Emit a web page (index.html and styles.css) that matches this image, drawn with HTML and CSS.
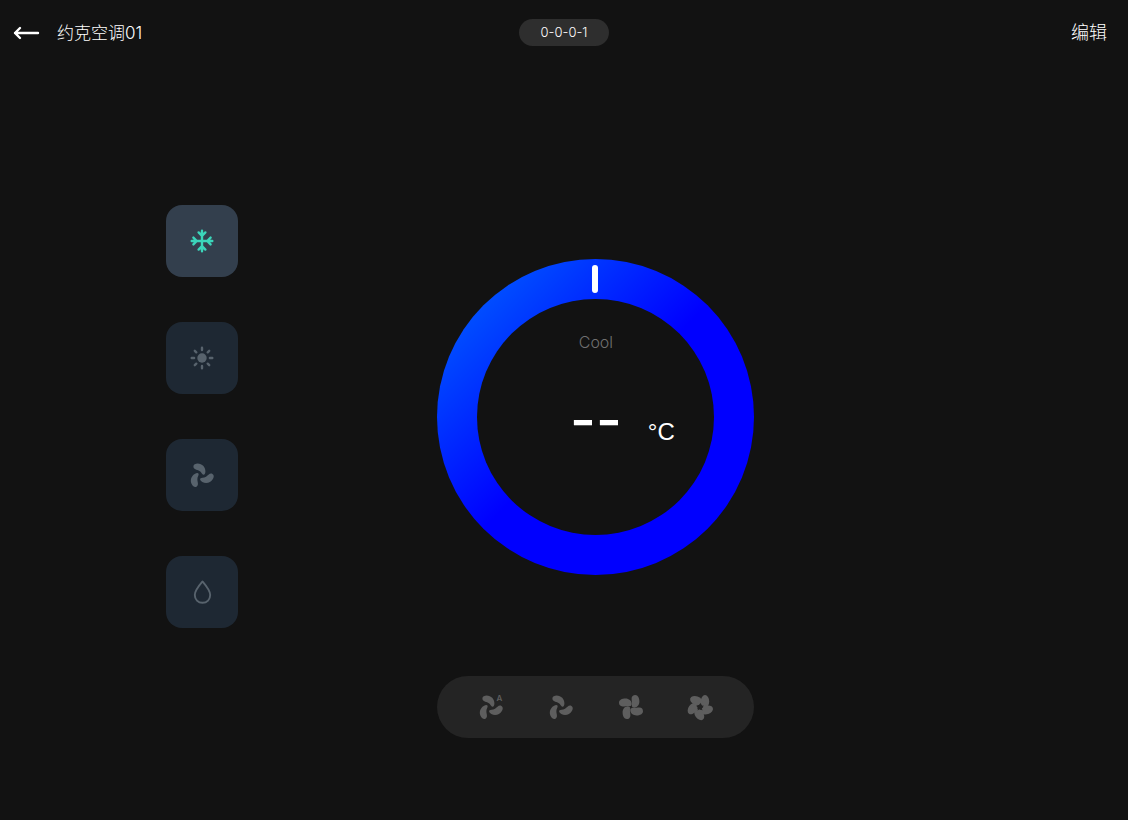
FILE: index.html
```html
<!DOCTYPE html>
<html lang="zh-CN">
<head>
  <meta charset="UTF-8">
  <meta name="viewport" content="width=device-width, initial-scale=1">
  <title>约克空调01</title>
  <link rel="stylesheet" href="styles.css">
</head>
<body>
  <!-- shared fan blades -->
  <svg class="defs" aria-hidden="true">
    <defs>
      <path id="blade" d="M-7.4 -9.2C-7.4 -11.4 -5.2 -12.1 -3.2 -12.1C1.4 -12.1 4.6 -8.4 4.6 -4.4C4.6 -2 3.8 -.9 2.7 -1C1.2 -1.2 .8 -3.8 -1.8 -5C-4 -6 -7.4 -6.4 -7.4 -9.2Z"/>
      <path id="blade4" d="M.6 -8.4C.6 -10.8 2.2 -12 4.2 -12C7 -12 8.4 -9 8.4 -5.5C8.4 -2 6 .6 3.5 .7C1.4 .8 .8 0 1 -1.8C1.3 -4.4 .6 -5.6 .6 -8.4Z"/>
      <g id="fan3">
        <use href="#blade"/>
        <use href="#blade" transform="rotate(120)"/>
        <use href="#blade" transform="rotate(240)"/>
      </g>
    </defs>
  </svg>

  <header class="header">
    <div class="header-left">
      <button class="back" aria-label="返回">
        <svg width="28" height="16" viewBox="0 0 28 16"><path d="M7 3L2 8L7 13M2 8H25"/></svg>
      </button>
      <h1 class="title">约克空调01</h1>
    </div>
    <span class="address">0-0-0-1</span>
    <button class="edit">编辑</button>
  </header>

  <main class="main">
    <nav class="modes" aria-label="模式">
      <button class="mode active" aria-label="制冷">
        <svg class="icon line" viewBox="-12 -12 24 24">
          <path d="M0 -10.3V10.3M-10.3 0H10.3M-3.4 -8.6L0 -5.2L3.4 -8.6M-3.4 8.6L0 5.2L3.4 8.6M-8.6 -3.4L-5.2 0L-8.6 3.4M8.6 -3.4L5.2 0L8.6 3.4"/>
        </svg>
      </button>
      <button class="mode" aria-label="制热">
        <svg class="icon line" viewBox="-12 -12 24 24">
          <circle class="core" r="4.7"/>
          <path d="M0 -10.3V-7.9M0 10.3V7.9M-10.3 0H-7.9M10.3 0H7.9M-7.2 -7.2L-5.7 -5.7M7.2 7.2L5.7 5.7M-7.2 7.2L-5.7 5.7M7.2 -7.2L5.7 -5.7"/>
        </svg>
      </button>
      <button class="mode" aria-label="送风">
        <svg class="icon" viewBox="-12 -12 24 24"><use href="#fan3" transform="translate(-1.2 .7)"/></svg>
      </button>
      <button class="mode" aria-label="除湿">
        <svg class="icon line drop" viewBox="-12 -12 24 24">
          <path d="M.5 -10.5C-2.5 -7 -7.2 -1.6 -7.2 3C-7.2 7.4 -4 10.8 .5 10.8C5 10.8 8.2 7.4 8.2 3C8.2 -1.6 3.5 -7 .5 -10.5Z"/>
        </svg>
      </button>
    </nav>

    <section class="panel">
      <div class="dial">
        <span class="marker"></span>
        <div class="dial-inner">
          <span class="mode-name">Cool</span>
          <div class="reading">
            <span class="temp">--</span>
            <span class="unit">°C</span>
          </div>
        </div>
      </div>

      <div class="speeds">
        <button class="speed" aria-label="自动">
          <svg class="icon" viewBox="-12 -12 24 24"><use href="#fan3" transform="translate(-1.2 .7)"/></svg>
          <span class="auto">A</span>
        </button>
        <button class="speed" aria-label="低风">
          <svg class="icon" viewBox="-12 -12 24 24"><use href="#fan3" transform="translate(-1.2 .7)"/></svg>
        </button>
        <button class="speed" aria-label="中风">
          <svg class="icon" viewBox="-12 -12 24 24">
            <use href="#blade4"/>
            <use href="#blade4" transform="rotate(90)"/>
            <use href="#blade4" transform="rotate(180)"/>
            <use href="#blade4" transform="rotate(270)"/>
          </svg>
        </button>
        <button class="speed" aria-label="高风">
          <svg class="icon" viewBox="-12 -12 24 24">
            <ellipse cx="5" cy="-5.6" rx="4.2" ry="6.3"/>
            <ellipse cx="5" cy="-5.6" rx="4.2" ry="6.3" transform="rotate(72)"/>
            <ellipse cx="5" cy="-5.6" rx="4.2" ry="6.3" transform="rotate(144)"/>
            <ellipse cx="5" cy="-5.6" rx="4.2" ry="6.3" transform="rotate(216)"/>
            <ellipse cx="5" cy="-5.6" rx="4.2" ry="6.3" transform="rotate(288)"/>
            <path class="hole" d="M.6 -4.2L1.2 -1.4L4 -1.2L1.7 .7L2.5 3.5L0 1.9L-2.5 3.5L-1.7 .7L-4 -1.2L-1.2 -1.4Z"/>
          </svg>
        </button>
      </div>
    </section>
  </main>
</body>
</html>
```

FILE: styles.css
```css
* {
  box-sizing: border-box;
}

body {
  margin: 0;
  min-height: 100vh;
  background-color: #121212;
  color: #fff;
  font-family: Inter, "Noto Sans CJK SC", sans-serif;
}

button {
  padding: 0;
  border: none;
  background: none;
  color: inherit;
  font-family: inherit;
  cursor: pointer;
}

svg {
  display: block;
}

.defs {
  position: absolute;
  width: 0;
  height: 0;
}

/* header */
.header {
  display: grid;
  grid-template-columns: 1fr auto 1fr;
  align-items: center;
  height: 65px;
  padding: 0 13px;
}

.header-left {
  display: flex;
  align-items: center;
  gap: 16px;
}

.back {
  fill: none;
  stroke: #fff;
  stroke-width: 2.4;
  stroke-linecap: round;
  stroke-linejoin: round;
}

.title {
  margin: 0;
  font-size: 17px;
  line-height: 24px;
  font-weight: 300;
}

.address {
  min-width: 90px;
  padding: 0 16px;
  border-radius: 14px;
  background-color: #2e2e2e;
  font-size: 13px;
  line-height: 27px;
  font-weight: 300;
  text-align: center;
}

.edit {
  justify-self: end;
  padding-right: 8px;
  font-size: 18px;
  line-height: 24px;
  font-weight: 300;
}

/* layout */
.main {
  display: grid;
  grid-template-columns: 95fr 90fr 80fr;
  align-items: start;
}

.modes {
  display: grid;
  justify-content: center;
  gap: 45px;
  padding-top: 140px;
}

.mode {
  display: grid;
  place-items: center;
  width: 72px;
  height: 72px;
  border-radius: 16px;
  background-color: #1e2833;
  color: #58636d;
}

.mode.active {
  background-color: #333f4d;
  color: #3bd5ba;
}

.icon {
  width: 24px;
  height: 24px;
  fill: currentColor;
  overflow: visible;
}

.icon.line {
  fill: none;
  stroke: currentColor;
  stroke-width: 2.4;
  stroke-linecap: round;
  stroke-linejoin: round;
}

.icon.drop {
  stroke-width: 1.9;
}

.icon .core {
  fill: currentColor;
  stroke: none;
}

.icon .hole {
  fill: #242424;
}

/* dial */
.panel {
  display: grid;
  justify-content: center;
  gap: 101px;
  padding-top: 194px;
}

.dial {
  position: relative;
  width: 317px;
  height: 316px;
  padding: 40px;
  border-radius: 50%;
  background: linear-gradient(135deg, #006cff, #00f 50%);
}

.marker {
  position: absolute;
  top: 6px;
  left: 50%;
  width: 6px;
  height: 28px;
  margin-left: -4px;
  border-radius: 3px;
  background-color: #fff;
}

.dial-inner {
  height: 100%;
  padding-top: 31px;
  border-radius: 50%;
  background-color: #121212;
  text-align: center;
}

.mode-name {
  display: block;
  color: #707070;
  font-size: 16px;
  line-height: 24px;
  font-weight: 300;
}

.reading {
  display: grid;
  grid-template-columns: 1fr auto 1fr;
  align-items: start;
  column-gap: 26px;
  padding-top: 30px;
}

.temp {
  grid-column: 2;
  font-size: 56px;
  line-height: 72px;
  font-weight: 500;
}

.unit {
  padding-top: 34px;
  font-family: "Liberation Sans", Arial, sans-serif;
  font-size: 24px;
  line-height: 28px;
  text-align: left;
}

/* fan speed */
.speeds {
  display: flex;
  align-items: center;
  justify-content: space-between;
  height: 62px;
  padding: 0 42px;
  border-radius: 31px;
  background-color: #242424;
}

.speed {
  position: relative;
  color: #5e5e5e;
}

.auto {
  position: absolute;
  top: -1px;
  right: 1px;
  font-size: 8px;
  line-height: 8px;
  font-weight: 600;
}
```
